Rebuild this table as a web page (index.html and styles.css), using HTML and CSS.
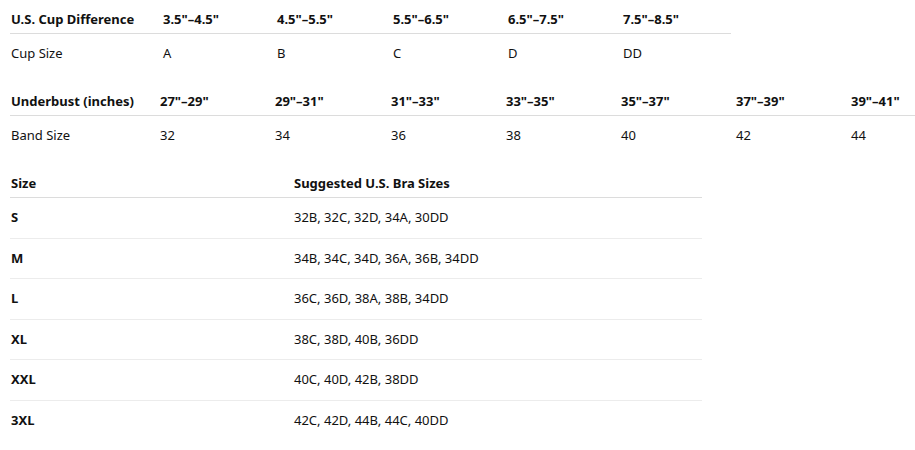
FILE: index.html
```html
<!DOCTYPE html>
<html>
<head>
<meta charset="utf-8">
<link rel="stylesheet" href="styles.css">
</head>
<body>
<div class="page">
  <table class="chart cup">
    <colgroup><col class="c152"><col class="c114"><col class="c116"><col class="c115"><col class="c115"><col class="c109"></colgroup>
    <thead><tr><th>U.S. Cup Difference</th><th>3.5"–4.5"</th><th>4.5"–5.5"</th><th>5.5"–6.5"</th><th>6.5"–7.5"</th><th>7.5"–8.5"</th></tr></thead>
    <tbody><tr><td>Cup Size</td><td>A</td><td>B</td><td>C</td><td>D</td><td>DD</td></tr></tbody>
  </table>
  <table class="chart band">
    <colgroup><col class="c149"><col class="c115"><col class="c116"><col class="c115"><col class="c115"><col class="c115"><col class="c115"><col class="c65"></colgroup>
    <thead><tr><th>Underbust (inches)</th><th>27"–29"</th><th>29"–31"</th><th>31"–33"</th><th>33"–35"</th><th>35"–37"</th><th>37"–39"</th><th>39"–41"</th></tr></thead>
    <tbody><tr><td>Band Size</td><td>32</td><td>34</td><td>36</td><td>38</td><td>40</td><td>42</td><td>44</td></tr></tbody>
  </table>
  <table class="chart sizes">
    <colgroup><col class="c283"><col class="c409"></colgroup>
    <thead><tr><th>Size</th><th>Suggested U.S. Bra Sizes</th></tr></thead>
    <tbody>
      <tr><td class="b">S</td><td>32B, 32C, 32D, 34A, 30DD</td></tr>
      <tr><td class="b">M</td><td>34B, 34C, 34D, 36A, 36B, 34DD</td></tr>
      <tr><td class="b">L</td><td>36C, 36D, 38A, 38B, 34DD</td></tr>
      <tr><td class="b">XL</td><td>38C, 38D, 40B, 36DD</td></tr>
      <tr><td class="b">XXL</td><td>40C, 40D, 42B, 38DD</td></tr>
      <tr><td class="b">3XL</td><td>42C, 42D, 44B, 44C, 40DD</td></tr>
    </tbody>
  </table>
</div>
</body>
</html>
```
FILE: styles.css
```css
html, body {
  margin: 0;
  padding: 0;
  background: #fff;
}
body {
  font-family: "Noto Sans", "Open Sans", sans-serif;
  font-size: 13px;
  color: #111;
}
.page {
  padding-left: 10px;
}
.chart {
  border-collapse: collapse;
  table-layout: fixed;
}
.cup { width: 721px; }
.band { width: 905px; }
.sizes { width: 692px; }
.c152 { width: 152px; }
.c149 { width: 149px; }
.c114 { width: 114px; }
.c115 { width: 115px; }
.c116 { width: 116px; }
.c109 { width: 109px; }
.c65 { width: 65px; }
.c283 { width: 283px; }
.c409 { width: 409px; }
.chart th, .chart td {
  text-align: left;
  padding: 0 0 0 1px;
  line-height: 18px;
  white-space: nowrap;
}
.chart th {
  font-weight: 700;
  padding-top: 10px;
  padding-bottom: 5px;
  border-bottom: 1px solid #dcdcdc;
}
.cup td, .band td {
  padding-top: 10px;
  padding-bottom: 20px;
}
.sizes td {
  padding-top: 11px;
  padding-bottom: 11px;
  line-height: 17.5px;
}
.sizes tbody tr + tr td {
  border-top: 1px solid #ececec;
}
.sizes td.b {
  font-weight: 700;
}
```
